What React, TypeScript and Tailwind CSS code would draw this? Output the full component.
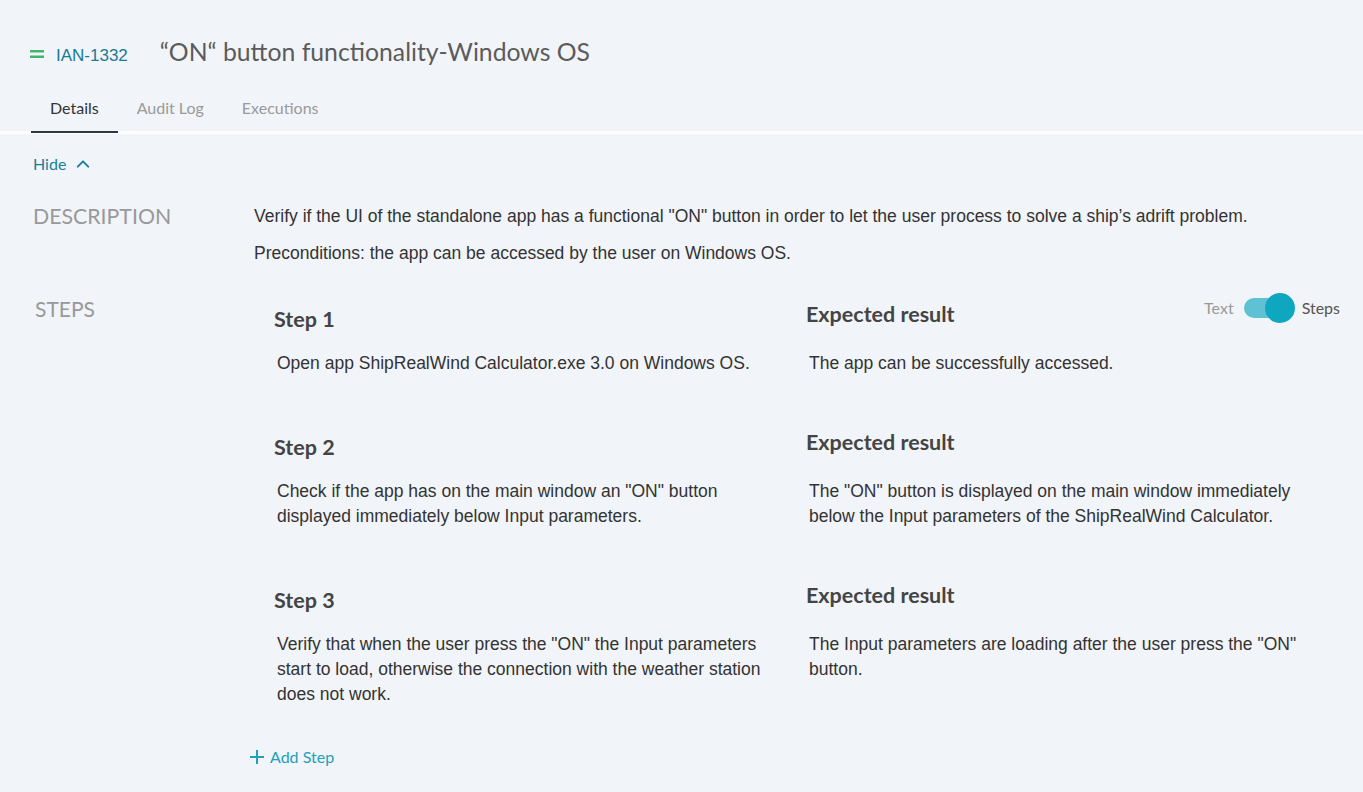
import React, { useState } from "react";

const steps = [
  {
    step: "Open app ShipRealWind Calculator.exe 3.0 on Windows OS.",
    result: "The app can be successfully accessed.",
  },
  {
    step: 'Check if the app has on the main window an "ON" button displayed immediately below Input parameters.',
    result:
      'The "ON" button is displayed on the main window immediately below the Input parameters of the ShipRealWind Calculator.',
  },
  {
    step: 'Verify that when the user press the "ON" the Input parameters start to load, otherwise the connection with the weather station does not work.',
    result: 'The Input parameters are loading after the user press the "ON" button.',
  },
];

const tabs = ["Details", "Audit Log", "Executions"];

const Toggle = ({ on, setOn }: { on: boolean; setOn: (v: boolean) => void }) => (
  <div className="flex items-center text-[16px] relative -top-[6px]">
    <span className="text-[#9a9a9a] mr-[10px]">Text</span>
    <button
      onClick={() => setOn(!on)}
      className="relative w-[46px] h-[20px] rounded-full bg-[#5ec1d4]"
    >
      <span className="absolute -top-[5px] right-[-5px] w-[30px] h-[30px] rounded-full bg-[#0fa6c0]" />
    </button>
    <span className="text-[#555] ml-[12px]">Steps</span>
  </div>
);

export default function App() {
  const [active, setActive] = useState("Details");
  const [stepsView, setStepsView] = useState(true);

  return (
    <div className="min-h-screen bg-[#f1f4f8] font-['Lato',sans-serif] pt-[32px]">
      {/* Header */}
      <div className="flex items-baseline h-10 pl-[30px]">
        <svg width="14" height="10" viewBox="0 0 14 10" className="mr-[12px] self-center mt-[3px]">
          <rect x="0" y="1" width="14" height="2.5" fill="#3fb56f" />
          <rect x="0" y="6.5" width="14" height="2.5" fill="#3fb56f" />
        </svg>
        <span className="text-[17px] text-[#1a7b94] font-['Liberation_Sans',Arial,sans-serif]">IAN-1332</span>
        <h1 className="ml-[32px] text-[24.75px] leading-10 text-[#5b5b5b]">“ON“ button functionality-Windows OS</h1>
      </div>

      {/* Tabs */}
      <div className="flex pl-[31px] border-b-[3px] border-white">
        {tabs.map((t) => (
          <button
            key={t}
            onClick={() => setActive(t)}
            className={
              active === t
                ? "px-[19px] pt-[26px] pb-[13px] text-[16px] leading-5 text-[#333] border-b-2 border-[#2f3541] -mb-[2px]"
                : "px-[19px] pt-[26px] pb-[13px] text-[16px] leading-5 text-[#9a9a9a] border-b-2 border-transparent -mb-[2px]"
            }
          >
            {t}
          </button>
        ))}
      </div>

      {/* Hide */}
      <div className="flex items-center pl-[33px] mt-[20px] text-[16px] leading-5 text-[#1a7f9a]">
        Hide
        <svg width="18" height="18" viewBox="0 0 24 24" className="ml-[8px]" fill="none" stroke="#1a7f9a" strokeWidth="2.6" strokeLinecap="round" strokeLinejoin="round">
          <path d="M5 15.5l7-7 7 7" />
        </svg>
      </div>

      {/* Description */}
      <div className="flex mt-[30px] pl-[33px]">
        <div className="w-[221px] text-[21.3px] leading-7 text-[#999] -mt-[2px]">DESCRIPTION</div>
        <div className="font-['Liberation_Sans',Arial,sans-serif] text-[17.5px] text-[#333] leading-6">
          <p>Verify if the UI of the standalone app has a functional "ON" button in order to let the user process to solve a ship’s adrift problem.</p>
          <p className="mt-[13px]">Preconditions: the app can be accessed by the user on Windows OS.</p>
        </div>
      </div>

      {/* Steps */}
      <div className="flex mt-[30px] pl-[35px] pr-[23px]">
        <div className="w-[219px] text-[21px] leading-7 text-[#999]">STEPS</div>
        <div className="flex-1">
          <div className="flex flex-col gap-y-[52px] pt-[5px]">
            {steps.map((s, i) => (
              <div key={i} className="grid grid-cols-[552px_1fr]">
                <div className="pl-[20px]">
                  <h3 className="mt-[5px] h-7 leading-7 text-[21.5px] font-bold text-[#444]">Step {i + 1}</h3>
                  <p className="mt-[18px] pl-[3px] w-[503px] font-['Liberation_Sans',Arial,sans-serif] text-[17.5px] leading-[25px] text-[#333]">
                    {s.step}
                  </p>
                </div>
                <div>
                  <div className="flex items-center justify-between h-7">
                    <h3 className="leading-7 text-[21.5px] font-bold text-[#444]">Expected result</h3>
                    {i === 0 && <Toggle on={stepsView} setOn={setStepsView} />}
                  </div>
                  <p className="mt-[23px] pl-[3px] w-[503px] font-['Liberation_Sans',Arial,sans-serif] text-[17.5px] leading-[25px] text-[#333]">
                    {s.result}
                  </p>
                </div>
              </div>
            ))}
          </div>

          <button className="flex items-center mt-[40px] -ml-[4px] text-[16px] leading-5 text-[#22a0bb]">
            <svg width="14" height="14" viewBox="0 0 14 14" className="mr-[6px]" stroke="#22a0bb" strokeWidth="2">
              <path d="M7 0v14M0 7h14" />
            </svg>
            Add Step
          </button>
        </div>
      </div>
      <div className="h-[20px]" />
    </div>
  );
}
